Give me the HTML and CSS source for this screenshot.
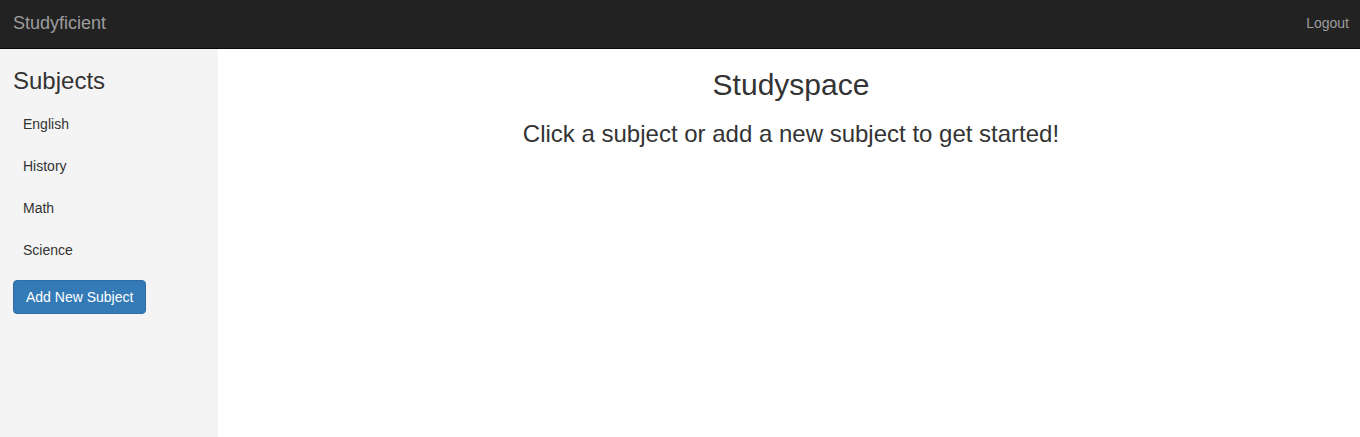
FILE: index.html
```html
<!DOCTYPE html>
<html>
<head>
<meta charset="utf-8">
<title>Studyficient</title>
<link rel="stylesheet" href="styles.css">
</head>
<body>
<nav class="navbar">
  <a class="brand" href="#">Studyficient</a>
  <a class="logout" href="#">Logout</a>
</nav>
<div class="layout">
  <aside class="sidebar">
    <h3 class="side-title">Subjects</h3>
    <ul class="subject-list">
      <li><a href="#">English</a></li>
      <li><a href="#">History</a></li>
      <li><a href="#">Math</a></li>
      <li><a href="#">Science</a></li>
    </ul>
    <button class="btn-primary">Add New Subject</button>
  </aside>
  <main class="content">
    <h2 class="title">Studyspace</h2>
    <h3 class="subtitle">Click a subject or add a new subject to get started!</h3>
  </main>
</div>
</body>
</html>
```
FILE: styles.css
```css
* { box-sizing: border-box; }
html, body { height: 100%; }
body {
  margin: 0;
  font-family: "Liberation Sans", Arial, sans-serif;
  font-size: 14px;
  line-height: 1.42857;
  color: #333;
  background: #fff;
  display: flex;
  flex-direction: column;
}
a { text-decoration: none; }
.navbar {
  height: 49px;
  background: #222;
  border-bottom: 1px solid #080808;
  display: flex;
  align-items: center;
  justify-content: space-between;
  padding: 0 11px 2px 13px;
  flex: none;
}
.brand { color: #9d9d9d; font-size: 18px; line-height: 20px; }
.logout { color: #9d9d9d; font-size: 14px; line-height: 20px; }
.layout { flex: 1; display: flex; min-height: 0; }
.sidebar {
  width: 218px;
  background: #f4f4f4;
  padding: 0 13px;
  flex: none;
}
.side-title {
  font-size: 24px;
  font-weight: 500;
  line-height: 1.1;
  margin: 19px 0 10px;
}
.subject-list { list-style: none; margin: 0 0 10px; padding: 0; }
.subject-list li + li { margin-top: 2px; }
.subject-list a {
  display: block;
  padding: 10px 10px;
  color: #333;
  line-height: 20px;
}
.btn-primary {
  font-family: inherit;
  font-size: 14px;
  line-height: 20px;
  padding: 6px 12px;
  height: 34px;
  color: #fff;
  background: #337ab7;
  border: 1px solid #2e6da4;
  border-radius: 4px;
}
.content { flex: 1; text-align: center; padding-left: 4px; }
.title {
  font-size: 30px;
  font-weight: 500;
  line-height: 1.1;
  margin: 19px 0 10px;
}
.subtitle {
  font-size: 24px;
  font-weight: 500;
  line-height: 1.1;
  margin: 20px 0 10px;
}
```
